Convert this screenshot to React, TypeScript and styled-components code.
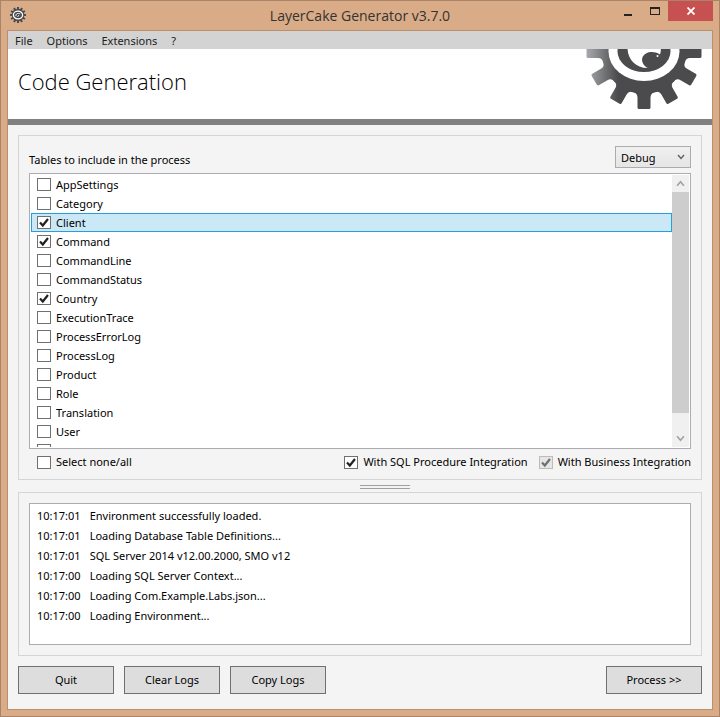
import React, { useState } from "react";
import styled, { createGlobalStyle, css } from "styled-components";

const GlobalStyle = createGlobalStyle`
  * { box-sizing: border-box; }
  body {
    margin: 0;
    font-family: "Noto Sans", "Open Sans", sans-serif;
    font-size: 11px;
    line-height: 16px;
    color: #000;
  }
  button, input, select { font: inherit; color: inherit; margin: 0; }
`;

const Window = styled.div`
  min-height: 100vh;
  display: flex;
  flex-direction: column;
  padding: 0 6px 6px;
  background: #daab87;
  border: 1px solid #a98468;
`;

const TitleBar = styled.header`
  display: grid;
  grid-template-columns: 1fr auto 1fr;
  height: 29px;
`;

const AppIcon = styled.span`
  display: flex;
  padding: 6px 0 0 3px;
`;

const WindowTitle = styled.h1`
  margin: 0;
  font-family: "Open Sans", sans-serif;
  font-size: 14px;
  font-weight: 400;
  line-height: 30px;
  color: #333;
`;

const WindowControls = styled.div`
  display: flex;
  justify-content: flex-end;
  align-items: flex-start;
`;

const ControlButton = styled.button<{ $close?: boolean }>`
  display: grid;
  place-items: center;
  width: ${(p) => (p.$close ? 45 : 27)}px;
  height: 20px;
  padding: 0;
  border: 0;
  background: ${(p) => (p.$close ? "#c75050" : "transparent")};
`;

const Client = styled.div`
  flex: 1;
  display: flex;
  flex-direction: column;
  border: 1px solid #b89070;
  background: #f4f4f4;
`;

const MenuBar = styled.nav`
  display: flex;
  gap: 14px;
  height: 18px;
  padding: 0 7px;
  background: #d3d3d3;
`;

const MenuItem = styled.button`
  padding: 0;
  border: 0;
  background: transparent;
  color: #212121;
  line-height: 20px;
`;

const Banner = styled.div`
  display: flex;
  justify-content: space-between;
  height: 76px;
  padding: 0 10px;
  background: #fff;
  border-bottom: 6px solid #808080;
`;

const PageTitle = styled.h2`
  margin: 0;
  font-family: "Open Sans", sans-serif;
  font-size: 22px;
  font-weight: 300;
  line-height: 64px;
`;

const Main = styled.main`
  flex: 1;
  display: flex;
  flex-direction: column;
  padding: 10px 10px 15px;
`;

const Group = styled.section<{ $grow?: boolean }>`
  display: flex;
  flex-direction: column;
  padding: 10px;
  border: 1px solid #d5d5d5;
  ${(p) => p.$grow && css`
    flex: 1;
    padding-bottom: 8px;
  `}
`;

const GroupHeader = styled.div`
  display: flex;
  justify-content: space-between;
  margin-bottom: 5px;
`;

const GroupLabel = styled.label`
  padding-top: 6px;
`;

const SelectBox = styled.span`
  display: grid;
  align-items: center;
  width: 76px;
  height: 22px;
  background: linear-gradient(#f0f0f0, #e5e5e5);
  border: 1px solid #acacac;

  > * { grid-area: 1 / 1; }
  > svg { justify-self: end; margin-right: 5px; pointer-events: none; }
`;

const Select = styled.select`
  appearance: none;
  width: 100%;
  height: 20px;
  padding: 2px 5px 0;
  border: 0;
  background: transparent;
`;

const ListFrame = styled.div`
  flex: 1 0 276px;
  display: flex;
  padding: 1px;
  background: #fff;
  border: 1px solid #abadb3;
`;

const TableList = styled.ul`
  flex: 1;
  height: 0;
  min-height: 100%;
  margin: 0;
  padding: 0;
  overflow: hidden;
  list-style: none;
`;

const TableRow = styled.li<{ $selected?: boolean }>`
  display: flex;
  height: 19px;
  padding: 0 5px;
  border: 1px solid ${(p) => (p.$selected ? "#26a0da" : "transparent")};
  background: ${(p) => (p.$selected ? "#cbe8f6" : "transparent")};
`;

const ScrollBar = styled.div`
  display: flex;
  flex-direction: column;
  width: 17px;
  background: #f0f0f0;
`;

const ScrollButton = styled.button`
  display: grid;
  place-items: center;
  height: 17px;
  padding: 0;
  border: 0;
  background: transparent;
`;

const ScrollTrack = styled.div`
  flex: 1;
`;

const ScrollThumb = styled.div`
  height: 93%;
  background: #cdcdcd;
`;

const CheckLabel = styled.label`
  display: flex;
  align-items: center;
  gap: 5px;
`;

const CheckFrame = styled.span`
  display: grid;
  > * { grid-area: 1 / 1; }
  > svg { pointer-events: none; }
`;

const CheckInput = styled.input`
  appearance: none;
  width: 14px;
  height: 13px;
  border: 1px solid #707070;
  background: #fff;
  &:disabled { border-color: #bcbcbc; background: #e6e6e6; }
`;

const OptionRow = styled.div`
  display: flex;
  gap: 11px;
  height: 18px;
  margin-top: 4px;
  padding-left: 8px;

  > :first-child { margin-right: auto; }
`;

const Splitter = styled.div`
  align-self: center;
  width: 50px;
  height: 4px;
  margin: 5px 0 3px 50px;
  border: solid #a0a0a0;
  border-width: 1px 0;
`;

const LogBox = styled.div`
  min-height: 142px;
  padding: 2px 7px;
  background: #fff;
  border: 1px solid #abadb3;
`;

const LogTable = styled.table`
  border-collapse: collapse;
  line-height: 20px;
  td { padding: 0 9px 0 0; white-space: nowrap; }
`;

const Actions = styled.footer`
  display: flex;
  gap: 10px;
  margin-top: 10px;
  > :last-child { margin-left: auto; }
`;

const ActionButton = styled.button`
  width: 96px;
  height: 28px;
  padding: 0;
  border: 1px solid #707070;
  background: #ddd;
`;

const teeth = Array.from({ length: 12 }, (_, i) => i * 30);

function Gear() {
  return (
    <svg width="116" height="60" viewBox="-58 -2.5 116 60" aria-hidden="true">
      <defs>
        <linearGradient id="metal" gradientUnits="userSpaceOnUse" x1="-58" y1="0" x2="-26" y2="0">
          <stop offset="0" stopColor="#a9abae" />
          <stop offset="1" stopColor="#4b4b4d" />
        </linearGradient>
        <mask id="gearShape" maskUnits="userSpaceOnUse" x="-60" y="-60" width="120" height="120">
          <g fill="#fff">
            {teeth.map((a) => (
              <path key={a} d="M-11 40 Q-6.5 42 -6.5 46 V56 Q-6.5 57.5 -5 57.5 H5 Q6.5 57.5 6.5 56 V46 Q6.5 42 11 40 Z" transform={`rotate(${a})`} />
            ))}
            <circle r="42.5" />
          </g>
          <ellipse rx="35.5" ry="29.5" fill="#000" />
        </mask>
      </defs>
      <rect x="-60" y="-60" width="120" height="120" fill="url(#metal)" mask="url(#gearShape)" />
      <ellipse rx="26.5" ry="20.5" fill="#4b4b4d" />
      <path d="M-16.5 -5 C-17 7 -9 16.5 3.500 16.5 C-3 13 -4 5 2 2 C6 0 11 0 16 3 C17 0 17 -3 16.5 -5 Z" fill="#fff" />
      <circle cx="13.5" cy="4.500" r="1" fill="#fff" />
    </svg>
  );
}

function SmallGear() {
  return (
    <svg width="16" height="16" viewBox="-8 -8 16 16" aria-hidden="true">
      <g fill="#4b4b4d">
        {teeth.map((a) => (
          <rect key={a} x="-1" y="-8" width="2" height="4" transform={`rotate(${a})`} />
        ))}
        <circle r="6.2" />
      </g>
      <ellipse rx="4.6" ry="3.8" fill="none" stroke="#fff" strokeWidth="1.3" />
      <path d="M-2 1.2 C-2.5 -1.600 0 -2 2.2 -1.2 M-.5 1.5 L1.200 .3" fill="none" stroke="#fff" strokeWidth="1" />
    </svg>
  );
}

function Chevron({ up, color, size = 8 }: { up?: boolean; color: string; size?: number }) {
  return (
    <svg width={size} height={size} viewBox="0 0 8 8" aria-hidden="true">
      <path d={up ? "M1 6 L4 2.5 L7 6" : "M1 2 L4 5.5 L7 2"} fill="none" stroke={color} strokeWidth="1.4" />
    </svg>
  );
}

type CheckProps = { label: string; initial?: boolean; disabled?: boolean };

function Check({ label, initial = false, disabled }: CheckProps) {
  const [checked, setChecked] = useState(initial);
  return (
    <CheckLabel>
      <CheckFrame>
        <CheckInput type="checkbox" checked={checked} disabled={disabled} onChange={(e) => setChecked(e.target.checked)} />
        {checked && (
          <svg width="14" height="13" viewBox="0 0 14 13" aria-hidden="true">
            <path d="M3 6.5 L5.8 9.5 L11 3" fill="none" stroke={disabled ? "#707070" : "#212121"} strokeWidth="2.2" />
          </svg>
        )}
      </CheckFrame>
      {label}
    </CheckLabel>
  );
}

const tables = [
  "AppSettings", "Category", "Client", "Command", "CommandLine", "CommandStatus", "Country", "ExecutionTrace",
  "ProcessErrorLog", "ProcessLog", "Product", "Role", "Translation", "User", "UserRole",
];
const included = ["Client", "Command", "Country"];

const logs = [
  ["10:17:01", "Environment successfully loaded."],
  ["10:17:01", "Loading Database Table Definitions..."],
  ["10:17:01", "SQL Server 2014 v12.00.2000, SMO v12"],
  ["10:17:00", "Loading SQL Server Context..."],
  ["10:17:00", "Loading Com.Example.Labs.json..."],
  ["10:17:00", "Loading Environment..."],
];

export default function App() {
  return (
    <>
      <GlobalStyle />
      <Window>
        <TitleBar>
          <AppIcon><SmallGear /></AppIcon>
          <WindowTitle>LayerCake Generator v3.7.0</WindowTitle>
          <WindowControls>
            <ControlButton aria-label="Minimize">
              <svg width="10" height="16" viewBox="0 0 10 16"><path d="M1 11 H9 V13 H1 Z" fill="#222" /></svg>
            </ControlButton>
            <ControlButton aria-label="Maximize">
              <svg width="10" height="16" viewBox="0 0 10 16"><path d="M0 4 H10 V12 H0 Z M1 6 V11 H9 V6 Z" fill="#222" fillRule="evenodd" /></svg>
            </ControlButton>
            <ControlButton $close aria-label="Close">
              <svg width="8" height="8" viewBox="0 0 8 8"><path d="M.5 .5 L7.5 7.5 M7.5 .5 L.5 7.5" stroke="#fff" strokeWidth="1.8" /></svg>
            </ControlButton>
          </WindowControls>
        </TitleBar>
        <Client>
          <MenuBar>
            {["File", "Options", "Extensions", "?"].map((item) => <MenuItem key={item}>{item}</MenuItem>)}
          </MenuBar>
          <Banner>
            <PageTitle>Code Generation</PageTitle>
            <Gear />
          </Banner>
          <Main>
            <Group $grow>
              <GroupHeader>
                <GroupLabel htmlFor="mode">Tables to include in the process</GroupLabel>
                <SelectBox>
                  <Select id="mode" defaultValue="Debug">
                    <option>Debug</option>
                    <option>Release</option>
                  </Select>
                  <Chevron color="#606060" />
                </SelectBox>
              </GroupHeader>
              <ListFrame>
                <TableList>
                  {tables.map((name) => (
                    <TableRow key={name} $selected={name === "Client"}>
                      <Check label={name} initial={included.includes(name)} />
                    </TableRow>
                  ))}
                </TableList>
                <ScrollBar>
                  <ScrollButton aria-label="Scroll up"><Chevron up color="#a0a0a0" size={9} /></ScrollButton>
                  <ScrollTrack><ScrollThumb /></ScrollTrack>
                  <ScrollButton aria-label="Scroll down"><Chevron color="#a0a0a0" size={9} /></ScrollButton>
                </ScrollBar>
              </ListFrame>
              <OptionRow>
                <Check label="Select none/all" />
                <Check label="With SQL Procedure Integration" initial />
                <Check label="With Business Integration" initial disabled />
              </OptionRow>
            </Group>
            <Splitter role="separator" />
            <Group>
              <LogBox>
                <LogTable>
                  <tbody>
                    {logs.map(([time, text]) => <tr key={text}><td>{time}</td><td>{text}</td></tr>)}
                  </tbody>
                </LogTable>
              </LogBox>
            </Group>
            <Actions>
              <ActionButton>Quit</ActionButton>
              <ActionButton>Clear Logs</ActionButton>
              <ActionButton>Copy Logs</ActionButton>
              <ActionButton>Process &gt;&gt;</ActionButton>
            </Actions>
          </Main>
        </Client>
      </Window>
    </>
  );
}
